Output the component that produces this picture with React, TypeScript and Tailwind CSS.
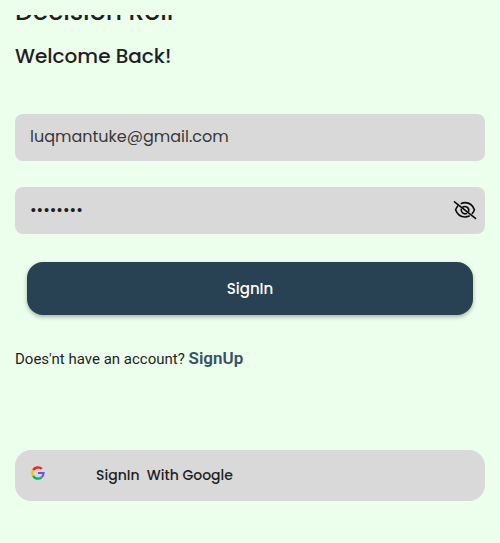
import { useState } from "react";

function EyeOffIcon() {
  return (
    <svg viewBox="0 0 24 20" className="block h-5 w-6" fill="none" stroke="#0b0b0b" strokeWidth="1.6" strokeLinecap="round" strokeLinejoin="round" aria-hidden="true">
      <path d="M8.3 3.4C9.4 2.9 10.7 2.6 12 2.6c4.2 0 7.8 2.5 9.4 7.2-.5 1.4-1.2 2.7-2.1 3.7" />
      <path d="M4.7 6C3.8 7 3.2 8.3 2.6 9.8 4.2 14.6 7.8 17 12 17c1.5 0 2.9-.3 4.2-.9" />
      <path d="M9.4 7.4a3.9 3.9 0 0 1 6.3 3.7" />
      <path d="M8.2 9.2a3.9 3.9 0 0 0 5.3 4.3" />
      <path d="M1.5 1.8 22.5 18.4" />
    </svg>
  );
}

function GoogleIcon() {
  return (
    <svg viewBox="0 0 14 14" className="mt-4 size-[14px] shrink-0 self-start" fill="none" strokeWidth="2.4" aria-hidden="true">
      <path d="M2.1 4.2A5.6 5.6 0 0 1 10.8 2.9" stroke="#f1261d" />
      <path d="M2.1 9.8A5.6 5.6 0 0 1 2.1 4.2" stroke="#fcc400" />
      <path d="M10.6 11.3A5.6 5.6 0 0 1 2.1 9.8" stroke="#0cb457" />
      <path d="M7 7h5.6a5.6 5.6 0 0 1-2 4.3" stroke="#6a4cf5" strokeWidth="2" />
    </svg>
  );
}

export default function App() {
  const [email, setEmail] = useState("luqmantuke@gmail.com");
  const [password, setPassword] = useState("password");
  const [visible, setVisible] = useState(false);

  return (
    <main className="min-h-screen bg-[#ecffec] p-[15px] font-[Poppins,Inter,sans-serif] text-[#1f1f1f]">
      <div className="flex h-[13px] items-end overflow-hidden">
        <h1 className="text-[25px] leading-8 font-medium">Decision Roll</h1>
      </div>
      <h2 className="mt-3 text-xl leading-8 font-medium">Welcome Back!</h2>

      <form className="mt-[42px]" onSubmit={(e) => e.preventDefault()}>
        <input
          type="email"
          aria-label="Email"
          value={email}
          onChange={(e) => setEmail(e.target.value)}
          className="block h-[47px] w-full rounded-lg bg-[#d9d9d9] px-[15px] pb-0.5 text-base text-[#383838] outline-none"
        />
        <div className="mt-[26px] flex h-[47px] items-center rounded-lg bg-[#d9d9d9] pr-2 pb-0.5 pl-[15px]">
          <input
            type={visible ? "text" : "password"}
            aria-label="Password"
            value={password}
            onChange={(e) => setPassword(e.target.value)}
            className="min-w-0 flex-1 bg-transparent text-base outline-none"
          />
          <button type="button" aria-label="Toggle password visibility" onClick={() => setVisible(!visible)}>
            <EyeOffIcon />
          </button>
        </div>
        <div className="mt-7 px-3">
          <button
            type="submit"
            className="h-[53px] w-full rounded-2xl bg-[#284254] pt-0.5 text-[15px] font-medium text-white shadow-[0_2px_4px_rgba(0,0,0,0.3)]"
          >
            SignIn
          </button>
        </div>
      </form>

      <p className="mt-[31px] font-[Roboto,sans-serif] text-[15px] leading-6">
        Does'nt have an account?{" "}
        <a href="#signup" className="text-[17px] font-semibold text-[#365265]">
          SignUp
        </a>
      </p>

      <button type="button" className="mt-[79px] flex h-[51px] w-full items-center rounded-2xl bg-[#d9d9d9] pb-0.5 pl-4 text-sm font-medium">
        <GoogleIcon />
        <span className="ml-[51px] whitespace-pre">SignIn  With Google</span>
      </button>
    </main>
  );
}
